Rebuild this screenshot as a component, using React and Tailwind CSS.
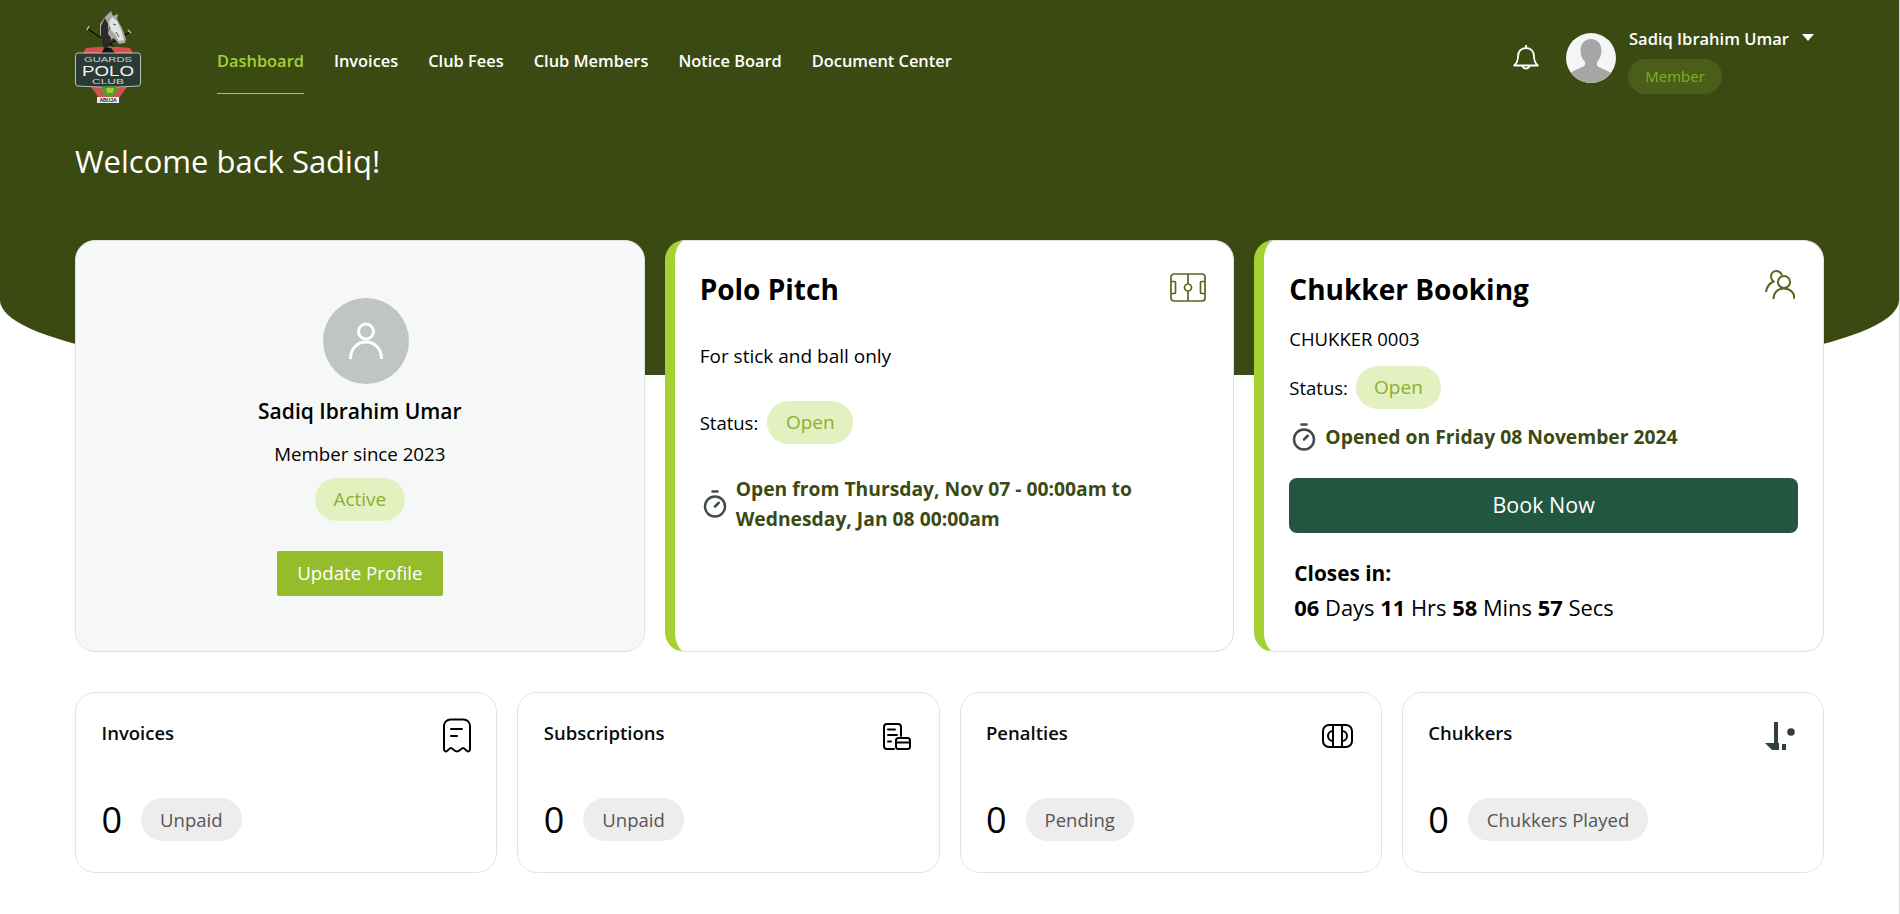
import React from "react";
import { Timer } from "lucide-react";

const navItems = ["Dashboard", "Invoices", "Club Fees", "Club Members", "Notice Board", "Document Center"];

const Logo = () => (
  <svg width="67" height="97" viewBox="0 0 67 97" fill="none">
    {/* mallets */}
    <path d="M13 19 L48 43 M55 22 L19 43" stroke="#111" strokeWidth="1.500" />
    <path d="M12 20 l2 -4 M56 23 l-3 -3" stroke="#cfcfcf" strokeWidth="1.200" />
    {/* shield */}
    <path d="M8 43 L11 38 Q33 35 55 38 L58 43 Z" fill="#d2504f" />
    <path d="M16 77 L52 77 L44 88 L24 88 Z" fill="#d2504f" />
    {/* horse head */}
    <path d="M36 1 L38 6 L43 4 L42 9 L47 18 L51 29 L50 33 L44 34 L39 28 L35 30 L33 36 L28 34 L25 24 L25 14 L30 7 Z" fill="#a8a8a8" />
    <path d="M37 7 L42 11 L46 20 L49 30 L44 31 L40 24 L36 20 L34 12 Z" fill="#e4e4e4" />
    <path d="M30 8 L33 14 L33 24 L36 28 L33 38 L29 40 L26 28 L26 16 Z" fill="#2b2b2b" />
    <path d="M38 14 l3 1 M41 22 l3 5 M35 17 l-2 5" stroke="#555" strokeWidth="1" />
    <path d="M30 38 L36 38 L40 43 L26 43 Z" fill="#111" />
    {/* badge */}
    <path d="M3 43 H63 Q65.500 43 65.500 46 V73 Q65.500 76 63 76 Q33 79 3 76 Q0.500 76 0.500 73 V46 Q0.500 43 3 43 Z" fill="#2a3a37" stroke="#dfe3e2" strokeWidth="0.800" />
    <text x="9" y="52" textLength="48" lengthAdjust="spacingAndGlyphs" fontSize="7" fill="#cfd3d2" fontFamily="Liberation Sans, sans-serif">GUARDS</text>
    <text x="7" y="65.500" textLength="52" lengthAdjust="spacingAndGlyphs" fontSize="15" fill="#f2f2f2" fontFamily="Liberation Sans, sans-serif">POLO</text>
    <text x="17" y="74" textLength="32" lengthAdjust="spacingAndGlyphs" fontSize="6.500" fill="#cfd3d2" fontFamily="Liberation Sans, sans-serif">CLUB</text>
    <path d="M27 77 L31 76 L42 76 L42 82 L37 87 L30 86 L27 82 Z" fill="#4f9a32" />
    <path d="M31 78 L39 78 L38 83 L32 83 Z" fill="#a7c437" />
    <rect x="22" y="87" width="22" height="6" fill="#ececec" />
    <text x="33" y="92" textAnchor="middle" fontSize="5" fontWeight="700" fill="#222" fontFamily="Liberation Sans, sans-serif">ABUJA</text>
  </svg>
);

const BellIcon = () => (
  <svg width="26" height="28" viewBox="0 0 26 28" fill="none" stroke="#fff" strokeWidth="1.800" strokeLinejoin="round">
    <path d="M13 1v3M13 4c-5 0-8 3.600-8 8.500 0 4-1 6.500-3.800 9h23.600C22 19 21 16.500 21 12.500 21 7.600 18 4 13 4Z" />
    <path d="M9.500 21.800a3.600 3.600 0 0 0 7 0" />
  </svg>
);

const AvatarPhoto = () => (
  <svg width="50" height="50" viewBox="0 0 50 50" className="rounded-full bg-[#f5f5f5]">
    <path d="M25 6c6.500 0 10.500 5 10.500 11.500 0 5-2 9-4.500 11.500v3.500c2 2.500 9 4 14 7.500L47 50H3l2-10.500c5-3.500 12-5 14-7.500V29c-2.500-2.500-4.500-6.500-4.500-11.500C14.500 11 18.500 6 25 6Z" fill="#a6a6a6" />
  </svg>
);

const UserOutline = () => (
  <svg width="34" height="38" viewBox="0 0 34 38" fill="none" stroke="#fff" strokeWidth="3" strokeLinecap="butt">
    <circle cx="17" cy="9.500" r="7.500" />
    <path d="M1.500 37c0-10 6.500-17 15.500-17s15.500 7 15.500 17" />
  </svg>
);

const PitchIcon = () => (
  <svg width="36" height="29" viewBox="0 0 36 29" fill="none" stroke="#54691e" strokeWidth="1.700">
    <rect x="1" y="1" width="34" height="27" rx="3" />
    <path d="M18 1v9.500M18 18.500V28" />
    <circle cx="18" cy="14.500" r="3.500" />
    <path d="M1 8.500h3.500a1 1 0 0 1 1 1v10a1 1 0 0 1-1 1H1M35 8.500h-3.500a1 1 0 0 0-1 1v10a1 1 0 0 0 1 1H35" />
  </svg>
);

const UsersIcon = () => (
  <svg width="30" height="30" viewBox="0 0 30 30" fill="none" stroke="#54691e" strokeWidth="2">
    <circle cx="19" cy="12" r="6" />
    <path d="M8.500 29c0-6.500 4.500-10.500 10.500-10.500S29.500 22.500 29.500 29" />
    <path d="M17 5.500C16 3 14 1 11.500 1 8 1 6 3.500 6 6.500c0 2 1 3.800 2.500 5C4.500 13.500 1.500 17.500 1 22" />
  </svg>
);

const ReceiptIcon = () => (
  <svg width="28" height="35" viewBox="0 0 28 35" fill="none" stroke="#000" strokeWidth="2" strokeLinecap="round" strokeLinejoin="round">
    <path d="M1 31V8a6.500 6.500 0 0 1 6.500-6.500h13A6.500 6.500 0 0 1 27 8v23c0 2-1.500 3-3 2-1.500-1-2.500-3-4-3s-3 3.500-6 3.500S9.500 30 8 30s-2.500 2-4 3-3 0-3-2Z" />
    <path d="M8 11h11M8 18h6" />
  </svg>
);

const BillIcon = () => (
  <svg width="28" height="27" viewBox="0 0 28 27" fill="none" stroke="#000" strokeWidth="2" strokeLinecap="round" strokeLinejoin="round">
    <path d="M11 26H4a3 3 0 0 1-3-3V4a3 3 0 0 1 3-3h11a3 3 0 0 1 3 3v9" />
    <path d="M5 6.500h7M5 12h9M5 18.500h3" strokeWidth="2" />
    <rect x="13" y="15" width="14" height="11" rx="2.500" />
    <path d="M13 19.500h14" />
  </svg>
);

const PenaltyIcon = () => (
  <svg width="31" height="24" viewBox="0 0 31 24" fill="none" stroke="#000" strokeWidth="2">
    <rect x="1" y="1" width="29" height="22" rx="6" />
    <path d="M11 1v22M20 1v22" />
    <path d="M11 7a5 5 0 0 0 0 10M20 7a5 5 0 0 1 0 10" />
  </svg>
);

const MalletIcon = () => (
  <svg width="30" height="28" viewBox="0 0 30 28" fill="#333f3c">
    <rect x="9" y="0" width="4" height="22" />
    <path d="M0 21h14v7H7Z" />
    <rect x="17" y="22" width="4" height="6" />
    <circle cx="26" cy="10" r="3.800" />
  </svg>
);

const StatusPill = ({ children, className = "" }) => (
  <span className={`inline-flex h-[43px] items-center justify-center rounded-full bg-[#e3f1c1] text-[19px] text-[#8ab02f] ${className}`}>
    {children}
  </span>
);

const StatCard = ({ title, icon, iconClass, label }) => (
  <div className="h-[181px] rounded-[20px] border border-[#e3e5e5] bg-white pl-[25.500px] pr-[25px] pt-[25px]">
    <div className="flex h-[48px] items-start justify-between">
      <h3 className="text-[18.500px] leading-[30px] font-semibold text-[#0b0b0b]">{title}</h3>
      <div className={iconClass}>{icon}</div>
    </div>
    <div className="mt-[32px] flex items-center gap-[19px]">
      <span className="text-[36px] leading-[43px] text-black">0</span>
      <span className="inline-flex h-[43px] items-center rounded-full bg-[#ededed] px-[19px] text-[18.500px] text-[#555]">{label}</span>
    </div>
  </div>
);

export default function App() {
  return (
    <div className="min-h-[914px] border-r border-[#d5d7d7] bg-white font-['Open_Sans',sans-serif]">
      <header className="h-[375px] rounded-b-[400px_75px] bg-[#3b4a12] px-[75px]">
        <div className="flex h-[120px] items-start">
          <div className="mt-[10px] w-[142px] shrink-0">
            <Logo />
          </div>
          <nav className="mt-[44px] flex gap-[30px]">
            {navItems.map((item, i) => (
              <a
                key={item}
                className={`h-[50px] text-[16.400px] leading-[34px] font-semibold ${
                  i === 0 ? "border-b border-[#a4d233] text-[#a4d233]" : "text-white"
                }`}
              >
                {item}
              </a>
            ))}
          </nav>
          <div className="mt-[33px] ml-auto flex items-start">
            <div className="mt-[11px] mr-[27px]">
              <BellIcon />
            </div>
            <AvatarPhoto />
            <div className="ml-[13px] w-[195px]">
              <div className="mt-[-7px] flex h-[26px] items-center">
                <span className="text-[16.500px] font-semibold text-white">Sadiq Ibrahim Umar</span>
                <span className="mt-[-3px] ml-[13px] border-x-[6px] border-t-[7px] border-x-transparent border-t-white" />
              </div>
              <span className="mt-[7px] ml-[-1px] inline-block h-[35px] w-[94px] rounded-full bg-[#4a5e1a] text-center text-[15px] leading-[35px] text-[#7fb01e]">
                Member
              </span>
            </div>
          </div>
        </div>
        <h1 className="mt-[18px] text-[31px] leading-[46px] text-white">Welcome back Sadiq!</h1>
      </header>

      <main className="mt-[-135px] px-[75px]">
        <div className="grid grid-cols-3 gap-[20px]">
          <section className="flex h-[412px] flex-col items-center rounded-[20px] border border-[#e0e2e2] bg-[#f6f8f7] pt-[57px]">
            <div className="ml-[12px] flex h-[86px] w-[86px] items-center justify-center rounded-full bg-[#c1c4c4]">
              <UserOutline />
            </div>
            <h2 className="mt-[12px] text-[21px] leading-[30px] font-semibold text-black">Sadiq Ibrahim Umar</h2>
            <p className="mt-[13px] text-[18.700px] leading-[30px] text-black">Member since 2023</p>
            <StatusPill className="mt-[9px] w-[90px]">Active</StatusPill>
            <button className="mt-[30px] h-[45px] w-[166px] rounded-[2px] bg-[#94bc2b] text-[18.700px] text-white">Update Profile</button>
          </section>

          <section className="h-[412px] rounded-[20px] border border-l-[10px] border-[#e0e2e2] border-l-[#a4d233] bg-white pt-[25px] pr-[27px] pl-[25px]">
            <div className="flex items-start justify-between">
              <h2 className="text-[28px] leading-[46px] font-bold text-black">Polo Pitch</h2>
              <div className="mt-[7px]">
                <PitchIcon />
              </div>
            </div>
            <p className="mt-[29px] text-[19px] leading-[30px] text-black">For stick and ball only</p>
            <div className="mt-[30px] flex items-center gap-[9px]">
              <span className="text-[18.500px] text-black">Status:</span>
              <StatusPill className="w-[86px]">Open</StatusPill>
            </div>
            <div className="mt-[30px] flex items-center gap-[6px]">
              <Timer size={30} strokeWidth={2} color="#3f4a4a" className="shrink-0" />
              <p className="text-[19.300px] leading-[30px] font-bold text-[#3b4a12]">
                Open from Thursday, Nov 07 - 00:00am to
                <br />
                Wednesday, Jan 08 00:00am
              </p>
            </div>
          </section>

          <section className="h-[412px] rounded-[20px] border border-l-[10px] border-[#e0e2e2] border-l-[#a4d233] bg-white pt-[25px] pr-[25px] pl-[25px]">
            <div className="flex items-start justify-between">
              <h2 className="text-[28px] leading-[46px] font-bold text-black">Chukker Booking</h2>
              <div className="mt-[4px] mr-[3px]">
                <UsersIcon />
              </div>
            </div>
            <p className="mt-[12px] text-[18.500px] leading-[30px] text-black">CHUKKER 0003</p>
            <div className="mt-[12px] flex items-center gap-[8px]">
              <span className="text-[18.500px] text-black">Status:</span>
              <StatusPill className="w-[85px]">Open</StatusPill>
            </div>
            <div className="mt-[13px] flex items-center gap-[6px]">
              <Timer size={30} strokeWidth={2} color="#3f4a4a" className="shrink-0" />
              <p className="text-[19.300px] leading-[30px] font-bold text-[#3b4a12]">Opened on Friday 08 November 2024</p>
            </div>
            <button className="mt-[26px] h-[55px] w-full rounded-[8px] bg-[#235641] text-[21.500px] text-white">Book Now</button>
            <div className="mt-[23px] pl-[5px] text-black">
              <p className="text-[20.800px] leading-[34px] font-bold">Closes in:</p>
              <p className="text-[21.900px] leading-[36px]">
                <b>06</b> Days <b>11</b> Hrs <b>58</b> Mins <b>57</b> Secs
              </p>
            </div>
          </section>
        </div>

        <div className="mt-[40px] grid grid-cols-4 gap-[20px]">
          <StatCard title="Invoices" icon={<ReceiptIcon />} label="Unpaid" />
          <StatCard title="Subscriptions" icon={<BillIcon />} iconClass="mt-[5px] mr-[3px]" label="Unpaid" />
          <StatCard title="Penalties" icon={<PenaltyIcon />} iconClass="mt-[6px] mr-[3px]" label="Pending" />
          <StatCard title="Chukkers" icon={<MalletIcon />} iconClass="mt-[4px] mr-[3px]" label="Chukkers Played" />
        </div>
      </main>
    </div>
  );
}
